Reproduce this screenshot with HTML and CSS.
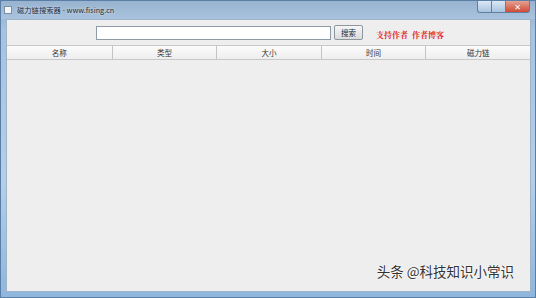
FILE: index.html
```html
<!DOCTYPE html>
<html lang="zh">
<head>
    <meta charset="UTF-8">
    <title>磁力链搜索器</title>
    <link rel="stylesheet" href="styles.css">
</head>
<body>
    <div class="window">
        <div class="titlebar">
            <span class="app-icon"></span>
            <span class="title">磁力链搜索器 - www.fising.cn</span>
            <div class="controls">
                <span class="ctl min"></span>
                <span class="ctl max"></span>
                <span class="ctl close">✕</span>
            </div>
        </div>

        <div class="client">
            <div class="searchrow">
                <input class="query" type="text">
                <button class="btn">搜索</button>
                <span class="links">支持作者&nbsp;&nbsp;作者博客</span>
            </div>

            <div class="table">
                <div class="thead">
                    <div class="th">名称</div>
                    <div class="th">类型</div>
                    <div class="th">大小</div>
                    <div class="th">时间</div>
                    <div class="th">磁力链</div>
                </div>
                <div class="tbody"></div>
            </div>
        </div>

        <div class="watermark">头条 @科技知识小常识</div>
    </div>
</body>
</html>
```

FILE: styles.css
```css
* {
    padding: 0;
    margin: 0;
    box-sizing: border-box;
}

body {
    font-family: 'Noto Sans CJK SC', 'DejaVu Sans', sans-serif;
    width: 536px;
    height: 298px;
    overflow: hidden;
}

.window {
    position: relative;
    width: 536px;
    height: 298px;
    display: flex;
    flex-direction: column;
    background: linear-gradient(180deg, #8eaccb 0%, #a6c2df 10%, #b5cfe8 60%, #8fb6de 100%);
    border: 1px solid #5a7fa6;
}

/* Title bar */
.titlebar {
    height: 18px;
    display: flex;
    align-items: center;
    padding-left: 3px;
    background: linear-gradient(180deg, #98b3cf, #a9c3de);
}

.app-icon {
    width: 8px;
    height: 8px;
    background: #f4f7fa;
    border: 1px solid #7d8fa3;
    margin-right: 5px;
}

.title {
    font-size: 7.3px;
    color: #1d2a3a;
    text-shadow: 0 0 3px rgba(255,255,255,0.8);
}

.controls {
    margin-left: auto;
    align-self: flex-start;
    display: flex;
    margin-right: 5px;
}

.ctl {
    height: 12px;
    border: 1px solid #5f7ea0;
    border-top: none;
    background: linear-gradient(180deg, #dbe8f5, #a8c3df);
}

.min {
    width: 15px;
    border-radius: 0 0 0 3px;
}

.max {
    width: 14px;
    border-left: none;
}

.close {
    width: 24px;
    border-left: none;
    border-radius: 0 0 3px 0;
    background: linear-gradient(180deg, #e6a193, #cf4a34);
    color: #fff;
    font-size: 8px;
    line-height: 11px;
    text-align: center;
}

/* Client area */
.client {
    flex: 1;
    margin: 0 4px 5px 5px;
    background: #eeeeee;
    border: 1px solid #9fb4c8;
    display: flex;
    flex-direction: column;
}

.searchrow {
    height: 25px;
    display: flex;
    align-items: center;
    padding-left: 89px;
}

.query {
    width: 235px;
    height: 14px;
    border: 1px solid #8e9aa6;
    background: #fff;
    outline: none;
}

.btn {
    width: 29px;
    height: 15px;
    margin-left: 3px;
    font-family: 'Noto Sans CJK SC', sans-serif;
    font-size: 7.5px;
    color: #1a2a3a;
    border: 1px solid #8e969e;
    border-radius: 2px;
    background: linear-gradient(180deg, #f6f6f6, #dcdcdc);
}

.links {
    margin-left: 13px;
    margin-top: 3px;
    font-family: 'Noto Serif CJK SC', 'Noto Sans CJK SC', serif;
    font-size: 8px;
    font-weight: bold;
    color: #e0262a;
}

.table {
    flex: 1;
    display: flex;
    flex-direction: column;
}

.thead {
    display: grid;
    grid-template-columns: repeat(5, 1fr);
    height: 15px;
    border-top: 1px solid #c8c8c8;
    border-bottom: 1px solid #c8c8c8;
    background: linear-gradient(180deg, #fbfbfb, #eeeeee);
}

.th {
    font-size: 7.5px;
    line-height: 13px;
    color: #333;
    text-align: center;
    border-left: 1px solid #c4c4c4;
}

.th:first-child {
    border-left: none;
}

.tbody {
    flex: 1;
    background: #eeeeee;
}

.watermark {
    position: absolute;
    right: 21px;
    bottom: 16px;
    font-size: 13.5px;
    color: #333;
    text-shadow: 0 0 2px #fff, 0 0 2px #fff;
}
```
